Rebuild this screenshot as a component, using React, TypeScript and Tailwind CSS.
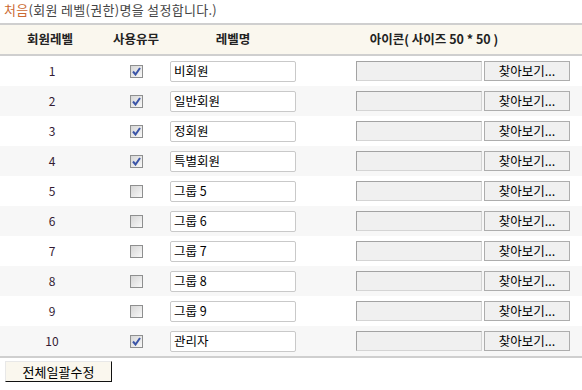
import React from "react";

const levels = [
  { no: 1, use: true, name: "비회원" },
  { no: 2, use: true, name: "일반회원" },
  { no: 3, use: true, name: "정회원" },
  { no: 4, use: true, name: "특별회원" },
  { no: 5, use: false, name: "그룹 5" },
  { no: 6, use: false, name: "그룹 6" },
  { no: 7, use: false, name: "그룹 7" },
  { no: 8, use: false, name: "그룹 8" },
  { no: 9, use: false, name: "그룹 9" },
  { no: 10, use: true, name: "관리자" },
];

function CheckMark({ checked }: { checked: boolean }) {
  return (
    <span className="flex h-[13px] w-[13px] items-center justify-center border border-[#8e8f8f] bg-gradient-to-br from-[#d6d6d6] to-[#f8f8f8]">
      {checked && (
        <svg width="9" height="9" viewBox="0 0 9 9">
          <path d="M1 4.5 L3.5 7.5 L8 1" fill="none" stroke="#3b55a8" strokeWidth="2" />
        </svg>
      )}
    </span>
  );
}

export default function App() {
  return (
    <div className="w-[582px] h-[390px] bg-white font-['Noto_Sans_CJK_KR',sans-serif] text-[12px] text-[#333]">
      <div className="h-[23px] pl-[4px] pt-[1px] text-[13px] tracking-[0.3px] leading-[18px] text-[#444]">
        <span className="text-[#cc6a33]">처음</span>(회원 레벨(권한)명을 설정합니다.)
      </div>

      {/* header */}
      <div className="flex h-[33px] items-center border-t-2 border-b-2 border-[#cfcfcf] bg-[#faf7ee] font-bold text-[12.5px] text-[#222]">
        <div className="w-[100px] text-center">회원레벨</div>
        <div className="w-[72px] text-center">사용유무</div>
        <div className="w-[122px] text-center">레벨명</div>
        <div className="flex-1 pr-[8px] text-center">아이콘( 사이즈 50 * 50 )</div>
      </div>

      {levels.map((lv, i) => (
        <div
          key={lv.no}
          className={`flex h-[30px] items-center ${i % 2 === 1 ? "bg-[#f7f7f7]" : "bg-white"}`}
        >
          <div className="w-[104px] text-center text-[12px] text-[#331a33]">{lv.no}</div>
          <div className="flex w-[64px] justify-center">
            <CheckMark checked={lv.use} />
          </div>
          <div className="ml-[2px] flex h-[21px] w-[126px] items-center rounded-[2px] border border-[#c9c9c9] bg-white pl-[3px] text-[12.5px] text-black">
            {lv.name}
          </div>
          <div className="ml-[60px] h-[20px] w-[126px] border border-[#a3a3a3] border-b-[#d4d4d4] border-r-[#d4d4d4] bg-[#f0f0f0]" />
          <div className="ml-[2px] flex h-[20px] w-[86px] items-center justify-center border border-[#adadad] bg-[#f0f0f0] text-[12.5px] text-black">
            찾아보기...
          </div>
        </div>
      ))}

      <div className="border-t-2 border-[#cfcfcf] pl-[5px] pt-[3px]">
        <div className="flex h-[21px] w-[107px] items-center justify-center border border-[#e8e8e8] border-b-[#111] border-r-[#111] bg-[#faf7ee] text-[13px] text-black">
          전체일괄수정
        </div>
      </div>
    </div>
  );
}
